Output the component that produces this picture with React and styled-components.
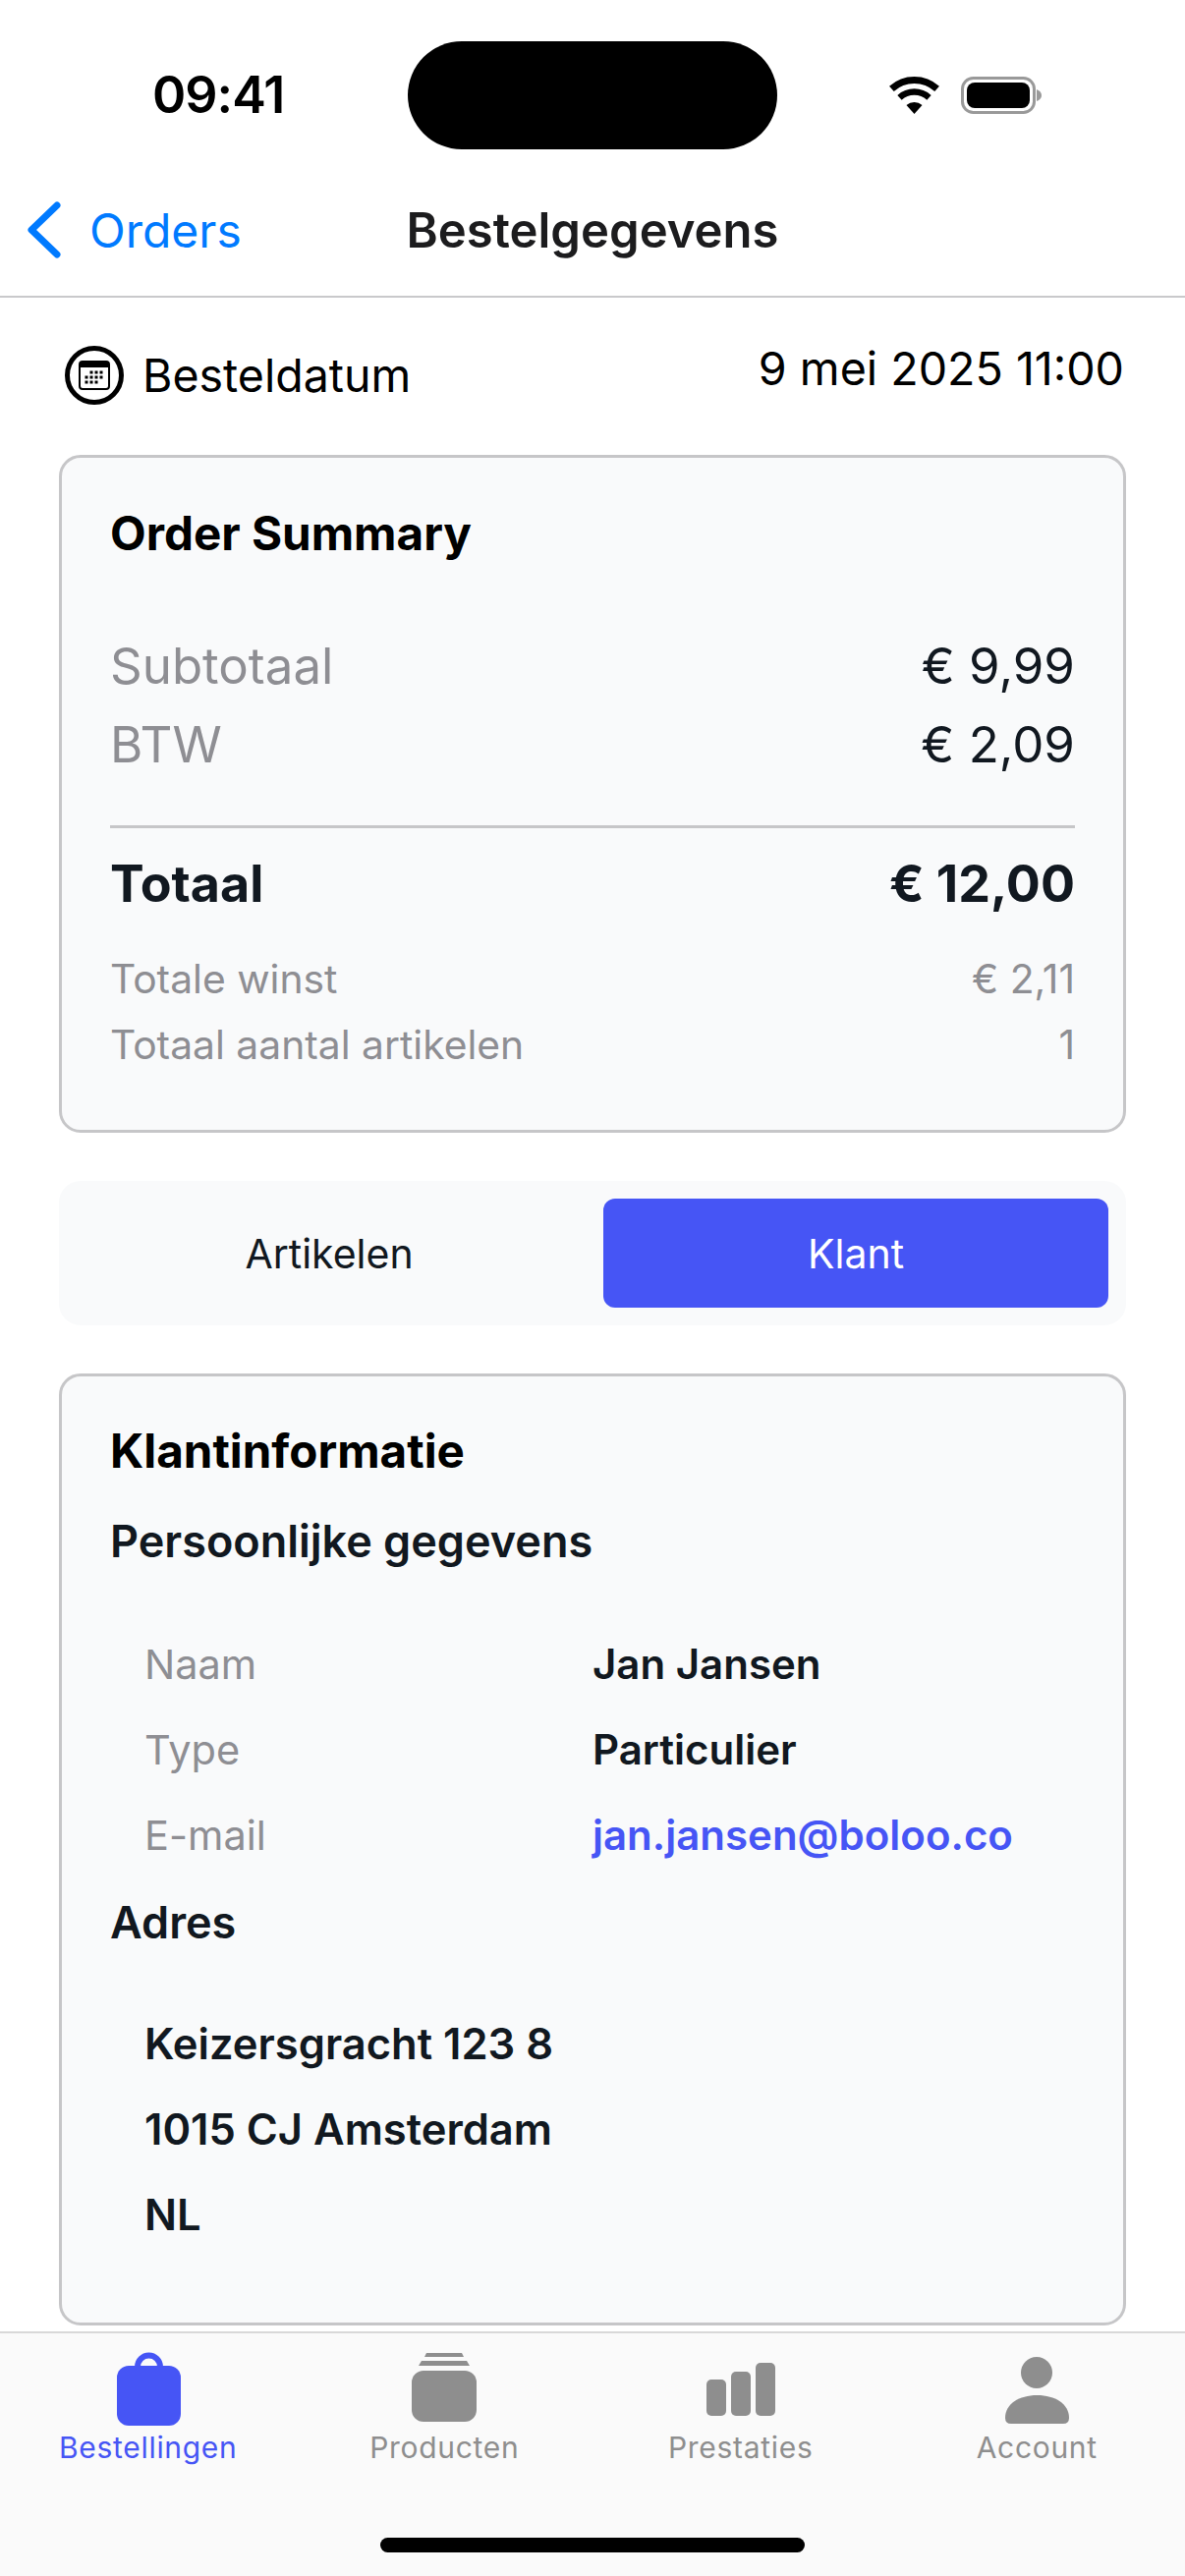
import React from 'react'
import styled, { createGlobalStyle } from 'styled-components'

const Global = createGlobalStyle`
  html, body { margin: 0; padding: 0; background: #fff; }
  body { font-family: Inter, "Liberation Sans", sans-serif; color: #111820; }
  * { box-sizing: border-box; }
`

const Page = styled.div`
  width: 1206px;
  height: 2622px;
  display: flex;
  flex-direction: column;
  overflow: hidden;
`

const StatusBar = styled.div`
  height: 180px;
  flex: none;
  display: grid;
  grid-template-columns: 415px 376px 1fr;
`

const Time = styled.div`
  padding: 71px 0 0 155px;
  font-size: 52px;
  line-height: 52px;
  font-weight: 600;
  letter-spacing: -1px;
  color: #000;
`

const Island = styled.div`
  margin-top: 42px;
  height: 110px;
  border-radius: 55px;
  background: #000;
`

const StatusIcons = styled.div`
  padding: 78px 0 0 114px;
  display: flex;
  gap: 22px;
  align-items: flex-start;
`

const NavBar = styled.div`
  height: 123px;
  flex: none;
  padding-bottom: 13px;
  border-bottom: 2px solid #c9c9cb;
  display: grid;
  grid-template-columns: 1fr auto 1fr;
  align-items: center;
`

const BackLink = styled.a`
  padding-left: 27px;
  display: flex;
  align-items: center;
  gap: 29px;
  font-size: 48px;
  color: #007aff;
`

const NavTitle = styled.div`
  font-size: 49px;
  font-weight: 600;
  color: #1c1c1e;
`

const Content = styled.main`
  flex: 1;
  min-height: 0;
  padding: 0 60px;
  display: flex;
  flex-direction: column;
`

const DateRow = styled.div`
  height: 160px;
  flex: none;
  display: flex;
  justify-content: space-between;
  padding: 49px 2px 0 6px;
`

const DateLabel = styled.div`
  display: flex;
  align-items: center;
  gap: 19px;
  height: 60px;
  font-size: 46.5px;
  color: #000;
`

const DateValue = styled.div`
  font-size: 46.6px;
  line-height: 46px;
  color: #000;
`

const Card = styled.section`
  flex: none;
  height: ${({ $height }) => $height}px;
  margin-top: ${({ $mt }) => $mt || 0}px;
  padding: 0 49px;
  border: 3px solid #c6c6c8;
  border-radius: 22px;
  background: #f9fafb;
`

const CardTitle = styled.h2`
  margin: 0;
  font-size: 47.6px;
  line-height: 60px;
  font-weight: 700;
  color: #000;
  padding-top: ${({ $top }) => $top}px;
`

const Row = styled.div`
  display: flex;
  justify-content: space-between;
  align-items: center;
  height: ${({ $h }) => $h}px;
  font-size: ${({ $size }) => $size}px;
  font-weight: ${({ $weight }) => $weight || 400};
  color: ${({ $color }) => $color || '#111820'};
`

const Muted = styled.span`
  color: #8e8e93;
`

const Rows = styled.div`
  padding-top: ${({ $top }) => $top}px;
`

const Divider = styled.hr`
  margin: ${({ $top }) => $top}px 0 0;
  border: 0;
  height: 3px;
  background: #c6c6c8;
`

const Segment = styled.div`
  flex: none;
  margin-top: 49px;
  height: 147px;
  padding: 18px;
  border-radius: 22px;
  background: #f9fafb;
  display: grid;
  grid-template-columns: 1fr 1fr;
  column-gap: 22px;
`

const SegmentItem = styled.div`
  display: flex;
  align-items: center;
  justify-content: center;
  border-radius: 12px;
  font-size: 41px;
  background: ${({ $active }) => ($active ? '#4655f5' : 'transparent')};
  color: ${({ $active }) => ($active ? '#fff' : '#111820')};
`

const SubHeading = styled.h3`
  margin: 0;
  font-size: 45px;
  font-weight: 600;
  line-height: 60px;
  color: #111820;
  padding-top: ${({ $top }) => $top || 0}px;
`

const InfoList = styled.div`
  padding: ${({ $top }) => $top}px 0 0 35px;
`

const InfoRow = styled.div`
  height: 87px;
  display: grid;
  grid-template-columns: 456px 1fr;
  align-items: center;
  font-size: 42px;
`

const InfoLabel = styled.span`
  font-size: 41.5px;
  color: #8e8e93;
`

const InfoValue = styled.span`
  font-weight: 600;
  color: ${({ $link }) => ($link ? '#4655f5' : '#111820')};
`

const AddressLine = styled.div`
  height: 87px;
  display: flex;
  align-items: center;
  font-size: 43.5px;
  font-weight: 600;
  color: #111820;
`

const TabBar = styled.nav`
  flex: none;
  height: 249px;
  margin-top: 6px;
  padding-top: 16px;
  position: relative;
  border-top: 2px solid #d8d8d8;
  background: #fafafa;
  display: grid;
  grid-template-columns: repeat(4, 1fr);
  align-items: start;
`

const Tab = styled.div`
  display: flex;
  flex-direction: column;
  align-items: center;
  font-size: 30px;
  line-height: 36px;
  letter-spacing: 0.7px;
  color: ${({ $active }) => ($active ? '#4655f5' : '#8e8e8e')};

  svg { display: block; margin-bottom: 2px; }
`

const HomeBar = styled.div`
  position: absolute;
  left: 387px;
  bottom: 24px;
  width: 432px;
  height: 15px;
  border-radius: 8px;
  background: #000;
`

const Wifi = () => (
  <svg width="51" height="38" viewBox="0 0 51 38">
    <path d="M2.4 12.4A34.5 34.5 0 0 1 48.6 12.4" fill="none" stroke="#000" strokeWidth="7" />
    <path d="M10.5 21.3A22.5 22.5 0 0 1 40.5 21.3" fill="none" stroke="#000" strokeWidth="6.5" />
    <path d="M25.5 38L17.5 29A12 12 0 0 1 33.5 29Z" fill="#000" />
  </svg>
)

const Battery = () => (
  <svg width="82" height="38" viewBox="0 0 82 38">
    <rect x="1.5" y="1.5" width="73" height="35" rx="11" fill="none" stroke="#999" strokeWidth="3" />
    <rect x="6" y="6" width="64" height="26" rx="8" fill="#000" />
    <path d="M77 13Q82 15 82 19T77 25Z" fill="#999" />
  </svg>
)

const Chevron = () => (
  <svg width="35" height="58" viewBox="0 0 35 58">
    <path d="M31 4L5 29L31 54" fill="none" stroke="#007aff" strokeWidth="7" strokeLinecap="round" strokeLinejoin="round" />
  </svg>
)

const dots = [
  [27, 27], [32, 27], [37, 27],
  [22, 32], [27, 32], [32, 32], [37, 32],
  [22, 37], [27, 37], [32, 37],
]

const CalendarIcon = () => (
  <svg width="60" height="60" viewBox="0 0 60 60">
    <circle cx="30" cy="30" r="27.5" fill="none" stroke="#000" strokeWidth="5" />
    <rect x="15" y="16" width="30" height="28" rx="3" fill="none" stroke="#000" strokeWidth="2" />
    <rect x="15" y="16" width="30" height="6" fill="#000" />
    {dots.map(([x, y]) => <rect key={`${x}-${y}`} x={x - 1.5} y={y - 1.5} width="3" height="3" fill="#000" />)}
  </svg>
)

const BagIcon = () => (
  <svg width="80" height="80" viewBox="0 0 80 80" fill="currentColor">
    <path d="M29 18A11.5 11.5 0 0 1 52 18" fill="none" stroke="currentColor" strokeWidth="6" />
    <rect x="8" y="17" width="65" height="61" rx="12" />
  </svg>
)

const BoxIcon = () => (
  <svg width="80" height="80" viewBox="0 0 80 80" fill="currentColor">
    <path d="M22 4H58L60 8H20Z" />
    <path d="M17 12H63L66 17H14Z" />
    <rect x="7" y="22" width="66" height="52" rx="12" />
  </svg>
)

const BarsIcon = () => (
  <svg width="80" height="80" viewBox="0 0 80 80" fill="currentColor">
    <rect x="5" y="31" width="20" height="37" rx="5" />
    <rect x="30" y="23" width="20" height="45" rx="5" />
    <rect x="55" y="14" width="20" height="54" rx="5" />
  </svg>
)

const PersonIcon = () => (
  <svg width="80" height="80" viewBox="0 0 80 80" fill="currentColor">
    <circle cx="40" cy="24" r="16" />
    <path d="M8 70C8 56 22 47 40.5 47C59 47 73 56 73 70Q73 76 67 76H14Q8 76 8 70Z" />
  </svg>
)

const tabs = [
  { label: 'Bestellingen', Icon: BagIcon, active: true },
  { label: 'Producten', Icon: BoxIcon },
  { label: 'Prestaties', Icon: BarsIcon },
  { label: 'Account', Icon: PersonIcon },
]

export default function App() {
  return (
    <Page>
      <Global />
      <StatusBar>
        <Time>09:41</Time>
        <Island />
        <StatusIcons>
          <Wifi />
          <Battery />
        </StatusIcons>
      </StatusBar>
      <NavBar>
        <BackLink>
          <Chevron />
          Orders
        </BackLink>
        <NavTitle>Bestelgegevens</NavTitle>
      </NavBar>
      <Content>
        <DateRow>
          <DateLabel>
            <CalendarIcon />
            Besteldatum
          </DateLabel>
          <DateValue>9 mei 2025 11:00</DateValue>
        </DateRow>

        <Card $height={690}>
          <CardTitle $top={47}>Order Summary</CardTitle>
          <Rows $top={64}>
            <Row $h={80} $size={51}><Muted>Subtotaal</Muted><span>€ 9,99</span></Row>
            <Row $h={80} $size={51}><Muted>BTW</Muted><span>€ 2,09</span></Row>
          </Rows>
          <Divider $top={43} />
          <Row $h={112} $size={52} $weight={700}><span>Totaal</span><span>€ 12,00</span></Row>
          <Rows $top={7}>
            <Row $h={67} $size={40.8} $color="#8e8e93"><span>Totale winst</span><span>€ 2,11</span></Row>
            <Row $h={67} $size={40.8} $color="#8e8e93"><span>Totaal aantal artikelen</span><span>1</span></Row>
          </Rows>
        </Card>

        <Segment>
          <SegmentItem>Artikelen</SegmentItem>
          <SegmentItem $active>Klant</SegmentItem>
        </Segment>

        <Card $height={969} $mt={49}>
          <CardTitle $top={46}>Klantinformatie</CardTitle>
          <SubHeading $top={32}>Persoonlijke gegevens</SubHeading>
          <InfoList $top={51}>
            <InfoRow><InfoLabel>Naam</InfoLabel><InfoValue>Jan Jansen</InfoValue></InfoRow>
            <InfoRow><InfoLabel>Type</InfoLabel><InfoValue>Particulier</InfoValue></InfoRow>
            <InfoRow><InfoLabel>E-mail</InfoLabel><InfoValue $link>jan.jansen@boloo.co</InfoValue></InfoRow>
          </InfoList>
          <SubHeading $top={16}>Adres</SubHeading>
          <InfoList $top={49}>
            <AddressLine>Keizersgracht 123 8</AddressLine>
            <AddressLine>1015 CJ Amsterdam</AddressLine>
            <AddressLine>NL</AddressLine>
          </InfoList>
        </Card>
      </Content>
      <TabBar>
        {tabs.map(({ label, Icon, active }) => (
          <Tab key={label} $active={active}>
            <Icon />
            {label}
          </Tab>
        ))}
        <HomeBar />
      </TabBar>
    </Page>
  )
}
